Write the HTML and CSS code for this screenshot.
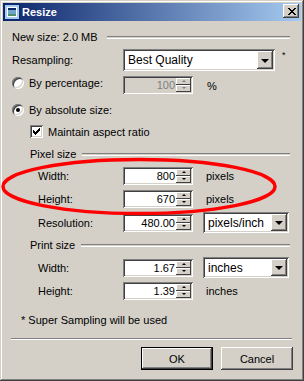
FILE: index.html
```html
<!DOCTYPE html>
<html lang="en">

<head>
    <meta charset="UTF-8">
    <title>Resize</title>
    <link rel="stylesheet" href="styles.css">
</head>

<body>
    <div class="window">
        <div class="titlebar">
            <svg class="app-icon" width="16" height="16" viewBox="0 0 16 16">
                <rect x="1" y="1" width="14" height="14" fill="#a6caf0"/>
                <path d="M0 0h5v1h-4v4h-1zM11 0h5v5h-1v-4h-4zM0 11h1v4h4v1h-5zM15 11h1v5h-5v-1h4z" fill="#0a246a"/>
                <rect x="3" y="3" width="10" height="10" fill="#fff"/>
                <rect x="4" y="4" width="8" height="2" fill="#0a246a"/>
                <rect x="4" y="6" width="8" height="6" fill="#6fa3c8"/>
                <rect x="4" y="10" width="8" height="2" fill="#4f8f6f"/>
            </svg>
            <span class="title">Resize</span>
            <span class="close">
                <svg width="8" height="7" viewBox="0 0 8 7">
                    <path d="M0 0h2v1h-2zM6 0h2v1h-2zM1 1h2v1h-2zM5 1h2v1h-2zM2 2h4v1h-4zM3 3h2v1h-2zM2 4h4v1h-4zM1 5h2v1h-2zM5 5h2v1h-2zM0 6h2v1h-2zM6 6h2v1h-2z" fill="#000"/>
                </svg>
            </span>
        </div>

        <div class="content">
            <div class="row head r-newsize">
                <span>New size: 2.0 MB</span>
                <span class="etch"></span>
            </div>

            <div class="row r-resample">
                <span class="label">Resampling:</span>
                <div class="select wide">
                    <span class="select-text">Best Quality</span>
                    <span class="drop"><i></i></span>
                </div>
                <span class="star">*</span>
            </div>

            <div class="row r-percent">
                <span class="label opt"><span class="radio"></span>By percentage:</span>
                <div class="spin disabled">
                    <span class="spin-value">100</span>
                    <span class="spin-btns"><b class="up"></b><b class="down"></b></span>
                </div>
                <span class="unit pct">%</span>
            </div>

            <div class="row r-absolute">
                <span class="label opt"><span class="radio on"></span>By absolute size:</span>
            </div>

            <div class="row r-check">
                <span class="check">
                    <svg width="7" height="7" viewBox="0 0 7 7">
                        <path d="M6 0h1v1h-1zM5 1h2v1h-2zM0 2h1v1h-1zM4 2h3v1h-3zM0 3h2v1h-2zM3 3h3v1h-3zM0 4h5v1h-5zM1 5h3v1h-3zM2 6h1v1h-1z" fill="#000"/>
                    </svg>
                </span>
                <span>Maintain aspect ratio</span>
            </div>

            <div class="row head sub r-pixel">
                <span>Pixel size</span>
                <span class="etch"></span>
            </div>

            <div class="row r-pwidth">
                <span class="label field-label">Width:</span>
                <div class="spin">
                    <span class="spin-value">800</span>
                    <span class="spin-btns"><b class="up"></b><b class="down"></b></span>
                </div>
                <span class="unit">pixels</span>
            </div>

            <div class="row r-pheight">
                <span class="label field-label">Height:</span>
                <div class="spin">
                    <span class="spin-value">670</span>
                    <span class="spin-btns"><b class="up"></b><b class="down"></b></span>
                </div>
                <span class="unit">pixels</span>
            </div>

            <div class="row r-res">
                <span class="label field-label">Resolution:</span>
                <div class="spin">
                    <span class="spin-value">480.00</span>
                    <span class="spin-btns"><b class="up"></b><b class="down"></b></span>
                </div>
                <div class="select narrow">
                    <span class="select-text">pixels/inch</span>
                    <span class="drop"><i></i></span>
                </div>
            </div>

            <div class="row head sub r-print">
                <span>Print size</span>
                <span class="etch"></span>
            </div>

            <div class="row r-iwidth">
                <span class="label field-label">Width:</span>
                <div class="spin">
                    <span class="spin-value">1.67</span>
                    <span class="spin-btns"><b class="up"></b><b class="down"></b></span>
                </div>
                <div class="select narrow">
                    <span class="select-text">inches</span>
                    <span class="drop"><i></i></span>
                </div>
            </div>

            <div class="row r-iheight">
                <span class="label field-label">Height:</span>
                <div class="spin">
                    <span class="spin-value">1.39</span>
                    <span class="spin-btns"><b class="up"></b><b class="down"></b></span>
                </div>
                <span class="unit">inches</span>
            </div>

            <div class="row r-note">* Super Sampling will be used</div>

            <div class="separator"></div>

            <div class="row buttons">
                <span class="btn default">OK</span>
                <span class="btn">Cancel</span>
            </div>
        </div>

        <svg class="mark" width="304" height="381" viewBox="0 0 304 381">
            <ellipse cx="139" cy="186.5" rx="136" ry="27" fill="none" stroke="#ff0000" stroke-width="3.5"/>
        </svg>
    </div>
</body>

</html>
```

FILE: styles.css
```css
body {
    margin: 0;
    font: 11px "Liberation Sans", Arial, sans-serif;
    color: #000;
}

.window {
    position: relative;
    width: 304px;
    height: 381px;
    box-sizing: border-box;
    padding: 3px;
    background: #d4d0c8;
    box-shadow: inset -1px -1px #404040, inset 1px 1px #d4d0c8,
        inset -2px -2px #808080, inset 2px 2px #fff;
}

/* title bar */
.titlebar {
    height: 18px;
    display: flex;
    align-items: center;
    padding: 0 2px 0 1px;
    background: linear-gradient(to right, #0a246a, #a6caf0);
    color: #fff;
}

.app-icon {
    display: block;
}

.title {
    margin-left: 2px;
    font-weight: bold;
    flex: 1;
}

.close {
    width: 16px;
    height: 14px;
    box-sizing: border-box;
    align-self: flex-start;
    margin-top: 1px;
    display: flex;
    align-items: center;
    justify-content: center;
    padding-left: 1px;
    background: #d4d0c8;
    box-shadow: inset -1px -1px #404040, inset 1px 1px #fff,
        inset -2px -2px #808080, inset 2px 2px #d4d0c8;
}

.close svg {
    display: block;
}

/* dialog body */
.content {
    padding: 0 8px 0 9px;
}

.row {
    display: flex;
    align-items: center;
}

.label {
    width: 111px;
    flex: none;
    box-sizing: border-box;
    display: flex;
    align-items: center;
}

.field-label {
    padding-left: 26px;
}

.head .etch {
    flex: 1;
    height: 1px;
    border-top: 1px solid #808080;
    border-bottom: 1px solid #fff;
    margin: 1px 3px 0 9px;
}

.head.sub {
    padding-left: 18px;
}

.head.sub .etch {
    margin-left: 6px;
}

.r-newsize { margin-top: 8px; height: 15px; }
.r-resample { margin-top: 5px; height: 22px; }
.r-percent { margin-top: 5px; height: 18px; align-items: flex-start; }
.r-absolute { margin-top: 9px; height: 13px; }
.r-check { margin-top: 9px; height: 13px; padding-left: 18px; }
.r-pixel { margin-top: 9px; height: 13px; }
.r-pwidth { margin-top: 7px; height: 18px; }
.r-pheight { margin-top: 5px; height: 18px; }
.r-res { margin-top: 4px; height: 21px; }
.r-print { margin-top: 5px; height: 13px; }
.r-iwidth { margin-top: 6px; height: 21px; }
.r-iheight { margin-top: 4px; height: 18px; }
.r-note { margin-top: 13px; height: 13px; padding-left: 9px; }

.r-percent .label {
    height: 13px;
}

/* radio and check */
.radio {
    position: relative;
    width: 12px;
    height: 12px;
    flex: none;
    margin-right: 5px;
    border-radius: 50%;
    background: #fff;
    box-shadow: inset 1px 1px #808080, inset -1px -1px #fff,
        inset 2px 2px #404040, inset -2px -2px #d4d0c8;
}

.radio.on::after {
    content: "";
    position: absolute;
    left: 4px;
    top: 4px;
    width: 4px;
    height: 4px;
    border-radius: 50%;
    background: #000;
}

.check {
    width: 13px;
    height: 13px;
    box-sizing: border-box;
    flex: none;
    margin-right: 5px;
    display: flex;
    align-items: center;
    justify-content: center;
    background: #fff;
    box-shadow: inset 1px 1px #808080, inset -1px -1px #fff,
        inset 2px 2px #404040, inset -2px -2px #d4d0c8;
}

.check svg {
    display: block;
}

/* sunken fields */
.spin,
.select {
    box-sizing: border-box;
    display: flex;
    padding: 2px;
    background: #fff;
    box-shadow: inset 1px 1px #808080, inset -1px -1px #fff,
        inset 2px 2px #404040, inset -2px -2px #d4d0c8;
}

.spin {
    width: 70px;
    height: 18px;
}

.spin-value {
    flex: 1;
    text-align: right;
    line-height: 14px;
    padding-right: 1px;
}

.spin-btns {
    width: 15px;
    display: flex;
    flex-direction: column;
}

.spin-btns b {
    flex: 1;
    position: relative;
    background: #d4d0c8;
    box-shadow: inset -1px -1px #404040, inset 1px 1px #fff;
}

.spin-btns b::after {
    content: "";
    position: absolute;
    left: 6px;
    top: 2px;
    border-left: 2px solid transparent;
    border-right: 2px solid transparent;
}

.spin-btns .up::after {
    border-bottom: 2px solid #000;
}

.spin-btns .down::after {
    border-top: 2px solid #000;
}

.spin.disabled {
    background: #d4d0c8;
    color: #808080;
}

.spin.disabled .spin-btns b::after {
    border-bottom-color: #808080;
    border-top-color: #808080;
}

.spin.disabled .spin-btns .up::after {
    border-top: none;
}

.spin.disabled .spin-btns .down::after {
    border-bottom: none;
}

.select {
    height: 21px;
    align-items: stretch;
}

.select.wide {
    width: 152px;
    height: 22px;
}

.select.narrow {
    width: 86px;
    margin-left: 10px;
}

.select-text {
    flex: 1;
    padding-left: 3px;
    display: flex;
    align-items: center;
    font-size: 12px;
}

.drop {
    width: 16px;
    display: flex;
    align-items: center;
    justify-content: center;
    background: #d4d0c8;
    box-shadow: inset -1px -1px #404040, inset 1px 1px #fff,
        inset -2px -2px #808080, inset 2px 2px #d4d0c8;
}

.drop i {
    border-left: 4px solid transparent;
    border-right: 4px solid transparent;
    border-top: 4px solid #000;
    margin-top: 1px;
}

.star {
    align-self: flex-start;
    margin: 1px 0 0 7px;
    font-size: 9px;
}

.unit {
    margin-left: 13px;
}

.unit.pct {
    margin-left: 14px;
    line-height: 20px;
}

.separator {
    margin: 12px 1px 0 -1px;
    height: 0;
    border-top: 1px solid #808080;
    border-bottom: 1px solid #fff;
}

/* buttons */
.buttons {
    margin-top: 7px;
    justify-content: flex-end;
    gap: 8px;
}

.btn {
    width: 72px;
    height: 23px;
    box-sizing: border-box;
    display: flex;
    align-items: center;
    justify-content: center;
    background: #d4d0c8;
    box-shadow: inset -1px -1px #404040, inset 1px 1px #fff,
        inset -2px -2px #808080, inset 2px 2px #d4d0c8;
}

.btn.default {
    border: 1px solid #000;
    box-shadow: inset -1px -1px #404040, inset 1px 1px #fff,
        inset -2px -2px #808080;
}

.mark {
    position: absolute;
    left: 0;
    top: 0;
    pointer-events: none;
}
```
